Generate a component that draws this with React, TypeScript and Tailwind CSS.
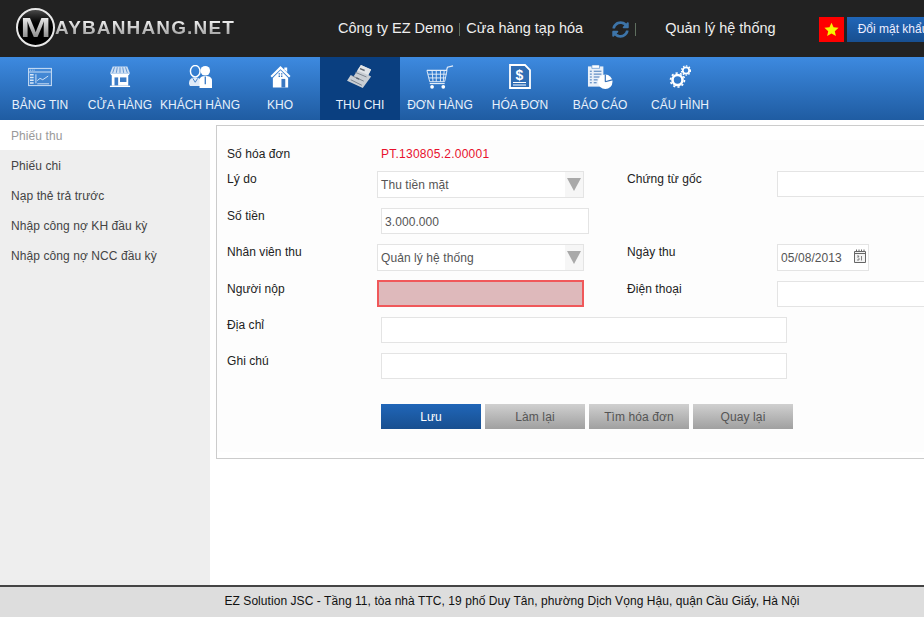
import React from 'react';
import { FaSyncAlt } from 'react-icons/fa';

const font = "font-['Liberation_Sans',Arial,sans-serif]";

const DashboardIcon = () => (
  <svg width="26" height="20" viewBox="0 0 28 22" fill="none" stroke="#dbe9f8" strokeWidth="1">
    <rect x="1.5" y="1.5" width="25" height="19" fill="#5e9be0" fillOpacity="0.35" />
    <path d="M2 5.5h24" />
    <path d="M3 3.5h1M5 3.5h1M7 3.5h1" />
    <path d="M3 8.5h4M3 11.5h4M3 14.5h4M3 17.5h4" strokeWidth="1.6" />
    <path d="M9.5 8v10" />
    <path d="M11 15l3-2.5 3 1.5 6-4" />
    <path d="M11 18.5h13" />
  </svg>
);

const StoreIcon = () => (
  <svg width="22" height="23" viewBox="0 0 24 24">
    <path d="M4 1h16l3 8H1z" fill="#cfe0f4" />
    <path d="M6 2L4 8M9 2L8 8M12 2v6M15 2l1 6M18 2l2 6" stroke="#4b86cb" strokeWidth="0.9" />
    <path d="M2 9h20v1.5H2z" fill="#fff" />
    <path d="M3 10h18v12H3z" fill="#fff" />
    <path d="M6 13h4v9H6z" fill="#3d7cc6" />
    <path d="M12 13h7v5h-7z" fill="#3d7cc6" />
    <path d="M1 22h22v1.500H1z" fill="#fff" />
  </svg>
);

const CustomerIcon = () => (
  <svg width="25" height="23" viewBox="0 0 26 24">
    <ellipse cx="7.5" cy="6.5" rx="5" ry="6" fill="none" stroke="#fff" strokeWidth="1.5" />
    <path d="M1 19c0-4 2.500-6 6.500-6 3 0 5 1 6 3v6H3c-1.200 0-2-1.500-2-3z" fill="#dfeaf8" />
    <path d="M5 14l2.500 4 2.500-4" fill="none" stroke="#3d7cc6" strokeWidth="1" />
    <circle cx="18" cy="6" r="5" fill="#fff" />
    <path d="M12 24v-8c0-3 2-4.500 6-4.500s7 1.500 7 4.500v8z" fill="#fff" />
    <path d="M18 12v8" stroke="#3d7cc6" strokeWidth="1.4" />
  </svg>
);

const HouseIcon = () => (
  <svg width="21" height="24" viewBox="0 0 22 24">
    <path d="M11 .5L.5 11l1.500 1.500L11 4l9 8.500 1.500-1.500z" fill="#fff" />
    <path d="M15 2h3v5l-3-3z" fill="#fff" />
    <path d="M3 13l8-8 8 8v10H3z" fill="#fff" />
    <path d="M12 14h4v9h-4z" fill="#3a78c2" />
    <path d="M9 8h1.500v1.500H9zM11.500 8H13v1.500h-1.500zM9 10.500h1.500V12H9zM11.500 10.500H13V12h-1.500z" fill="#3a78c2" />
  </svg>
);

const MoneyIcon = () => (
  <svg width="30" height="25" viewBox="0 0 30 27">
    <path d="M16 1l11 5-3 6 3 1.500-9 12.500L1 18l4-6 3 1.500z" fill="#c9ced4" />
    <path d="M16 1l11 5-3 6-12-5z" fill="#e1e4e8" />
    <path d="M10 9l12 5M7 13l12 5.500M5 17l12 6" stroke="#78808a" strokeWidth="1" />
    <path d="M15 5l5 2M11 15l3 1.400" stroke="#5c646e" strokeWidth="1.5" />
  </svg>
);

const CartIcon = () => (
  <svg width="28" height="26" viewBox="0 0 30 26" fill="none" stroke="#e3edf9" strokeWidth="1">
    <path d="M1 6h21l1-3.500L29 1" strokeWidth="1.300" />
    <path d="M1 6l3 12h16l2.500-12" />
    <path d="M2 10h20M3 14h18" />
    <path d="M6.500 6l1 12M11 6v12M15.500 6v12M19.500 6l-1 12" />
    <path d="M4 20h16" strokeWidth="1.300" />
    <circle cx="6.500" cy="23.500" r="2" fill="#fff" stroke="none" />
    <circle cx="18.500" cy="23.500" r="2" fill="#fff" stroke="none" />
  </svg>
);

const InvoiceIcon = () => (
  <svg width="22" height="25" viewBox="0 0 22 25">
    <path d="M1 1h15l5 5v18H1z" fill="#2f6db5" stroke="#fff" strokeWidth="1.800" />
    <text x="10.500" y="15.500" textAnchor="middle" fill="#fff" fontSize="14" fontWeight="700" fontFamily="Liberation Sans, sans-serif">$</text>
    <path d="M4 18.500h13M4 21h13" stroke="#fff" strokeWidth="1" />
  </svg>
);

const ReportIcon = () => (
  <svg width="26" height="26" viewBox="0 0 27 26">
    <path d="M1 2h16v21H1z" fill="#e9f0f9" />
    <path d="M5 0.500h8V4H5z" fill="#fff" stroke="#3d7cc6" strokeWidth="0.600" />
    <path d="M3 7h2M7 7h8M3 10h2M7 10h8M3 13h2M7 13h6M3 16h2M7 16h4M3 19h2M7 19h3" stroke="#3d74b6" strokeWidth="1" />
    <circle cx="19" cy="18" r="7.500" fill="#fff" />
    <path d="M19 18V10.500M19 18l7 -2" stroke="#356fb5" strokeWidth="1.200" />
  </svg>
);

const GearsIcon = () => (
  <svg width="22" height="24" viewBox="0 0 22 24" fill="none" stroke="#fff">
    <circle cx="8.500" cy="15" r="5" strokeWidth="2.600" />
    <circle cx="8.500" cy="15" r="7" strokeWidth="1.600" strokeDasharray="2.200 2.200" />
    <circle cx="17" cy="5.500" r="3.200" strokeWidth="1.800" />
    <circle cx="17" cy="5.500" r="4.600" strokeWidth="1.200" strokeDasharray="1.500 1.500" />
  </svg>
);

const navItems = [
  { label: 'BẢNG TIN', icon: <DashboardIcon /> },
  { label: 'CỬA HÀNG', icon: <StoreIcon /> },
  { label: 'KHÁCH HÀNG', icon: <CustomerIcon /> },
  { label: 'KHO', icon: <HouseIcon /> },
  { label: 'THU CHI', icon: <MoneyIcon />, active: true },
  { label: 'ĐƠN HÀNG', icon: <CartIcon /> },
  { label: 'HÓA ĐƠN', icon: <InvoiceIcon /> },
  { label: 'BÁO CÁO', icon: <ReportIcon /> },
  { label: 'CẤU HÌNH', icon: <GearsIcon /> },
];

const sideItems = ['Phiếu thu', 'Phiếu chi', 'Nạp thẻ trả trước', 'Nhập công nợ KH đầu kỳ', 'Nhập công nợ NCC đầu kỳ'];

const Label = ({ children, className = 'pt-[1px]' }: { children: React.ReactNode; className?: string }) => (
  <div className={`w-[150px] shrink-0 text-[12px] leading-[14px] tracking-[0.06px] text-[#222] ${className}`}>{children}</div>
);

const SelectBox = ({ value }: { value: string }) => (
  <div className="flex h-[27px] w-[207px] items-center justify-between border border-[#e4e4e4] bg-white pl-[3px] text-[12px] tracking-[0.08px] text-[#555]">
    {value}
    <div className="flex h-full w-[18px] items-center justify-center bg-[#f6f6f6]">
      <div className="h-0 w-0 border-x-[7px] border-t-[13px] border-x-transparent border-t-[#a9a9a9]" />
    </div>
  </div>
);

const TextBox = ({ className, value }: { className: string; value?: string }) => (
  <div className={`flex h-[26px] items-center border border-[#e4e4e4] bg-white pt-[1px] pl-[3px] text-[12px] tracking-[0.08px] text-[#555] ${className}`}>{value}</div>
);

const Row = ({ className, children }: { className: string; children: React.ReactNode }) => (
  <div className={`flex items-start ${className}`}>{children}</div>
);

const FormButton = ({ children, primary }: { children: string; primary?: boolean }) => (
  <button
    className={`h-[25px] w-[100px] text-[12px] tracking-[0.1px] ${
      primary ? 'bg-gradient-to-b from-[#2066b8] to-[#184f90] text-white' : 'bg-gradient-to-b from-[#d0d0d0] to-[#a0a0a0] text-[#555]'
    }`}
  >
    {children}
  </button>
);

export default function App() {
  return (
    <div className={`${font} flex h-[617px] w-[924px] flex-col overflow-hidden bg-white`}>
      {/* Header */}
      <header className="flex h-[57px] shrink-0 items-center bg-[#222222] pt-[1px] whitespace-nowrap">
        <div className="mb-[3px] ml-[16px] flex w-[322px] shrink-0 items-center">
          <div className="flex h-[39px] w-[39px] shrink-0 items-center justify-center overflow-hidden rounded-full border-2 border-[#e8e8e8] bg-gradient-to-b from-[#4a4a4a] via-black to-black">
            <span className="inline-block scale-x-[1.3] bg-gradient-to-b from-white to-[#777] bg-clip-text text-[28px] leading-none font-bold text-transparent">M</span>
          </div>
          <span className="bg-gradient-to-b from-white to-[#9a9a9a] bg-clip-text text-[19px] leading-none font-bold tracking-[1.15px] text-transparent">AYBANHANG.NET</span>
        </div>
        <span className="shrink-0 text-[14.5px] text-[#eee]">Công ty EZ Demo</span>
        <span className="mx-[6px] h-[13px] w-px shrink-0 bg-[#5f6f5f]" />
        <span className="shrink-0 text-[14.5px] text-[#eee]">Cửa hàng tạp hóa</span>
        <FaSyncAlt className="ml-[29px] shrink-0 text-[#3d74a8]" size={17} />
        <span className="ml-[6px] h-[13px] w-px shrink-0 bg-[#5f6f5f]" />
        <span className="ml-[29px] shrink-0 text-[14.5px] text-[#eee]">Quản lý hệ thống</span>
        <div className="ml-[43px] flex h-[25px] w-[25px] shrink-0 items-center justify-center bg-[#ff0000]">
          <svg width="15" height="15" viewBox="0 0 24 24">
            <path d="M12 1l3.300 7.400 8 .8-6 5.400 1.700 7.900L12 18.400l-7 4.100 1.700-7.900-6-5.400 8-.8z" fill="#f5f500" />
          </svg>
        </div>
        <button className="ml-[3px] h-[25px] w-[110px] shrink-0 bg-gradient-to-b from-[#2066b8] to-[#184f90] pl-[11px] text-left text-[12px] whitespace-nowrap text-[#eef]">Đổi mật khẩu</button>
      </header>

      {/* Nav */}
      <nav className="flex h-[63px] shrink-0 bg-gradient-to-b from-[#3d8ae0] to-[#1f5ca2]">
        {navItems.map((item) => (
          <div
            key={item.label}
            className={`flex h-full w-[80px] flex-col items-center ${item.active ? 'bg-[#0a3f80]' : ''}`}
          >
            <div className="flex h-[39px] items-center justify-center">{item.icon}</div>
            <span className="mt-[2px] text-[12px] leading-[14px] whitespace-nowrap text-[#e8f1fb]">{item.label}</span>
          </div>
        ))}
      </nav>

      <div className="flex min-h-0 flex-1">
        {/* Sidebar */}
        <aside className="w-[210px] shrink-0 bg-[#eeeeee]">
          {sideItems.map((item, i) => (
            <div key={item} className={`flex h-[30px] items-center pt-[1px] pl-[11px] text-[12px] tracking-[0.08px] ${i === 0 ? 'bg-white text-[#999]' : 'text-[#444]'}`}>
              {item}
            </div>
          ))}
        </aside>

        {/* Form panel */}
        <main className="flex-1 pt-[5px] pl-[6px]">
          <div className="h-[334px] w-[800px] border border-[#cccccc] pt-[14px] pb-[6px]">
            <div className="h-[312px] bg-[#fdfdfd] pt-[6px] pl-[10px]">
              <Row className="h-[25px]">
                <Label>Số hóa đơn</Label>
                <span className="pt-[1px] pl-[4px] text-[12px] leading-[14px] tracking-[0.25px] text-[#e8112d]">PT.130805.2.00001</span>
              </Row>
              <Row className="h-[37px]">
                <Label>Lý do</Label>
                <SelectBox value="Thu tiền mặt" />
                <div className="w-[43px]" />
                <Label>Chứng từ gốc</Label>
                <TextBox className="w-[200px]" />
              </Row>
              <Row className="h-[36px]">
                <Label>Số tiền</Label>
                <TextBox className="ml-[4px] w-[208px]" value="3.000.000" />
              </Row>
              <Row className="h-[36px]">
                <Label>Nhân viên thu</Label>
                <SelectBox value="Quản lý hệ thống" />
                <div className="w-[43px]" />
                <Label>Ngày thu</Label>
                <div className="flex h-[27px] w-[92px] items-center justify-between border border-[#e4e4e4] bg-white pr-[2px] pl-[3px] text-[12px] tracking-[0.08px] text-[#555]">
                  05/08/2013
                  <svg className="mb-[3px]" width="12" height="14" viewBox="0 0 12 14" fill="none" stroke="#666">
                    <path d="M.5 2.500h11v11H.5z" fill="#f3f3f3" />
                    <path d="M1 4.500h10" />
                    <path d="M2.500 .5v2M5 .5v2M7.500 .5v2M10 .5v2" />
                    <path d="M3 7h2l-1 1.500 1 1v1.500H3M7.500 7v4.500" strokeWidth="0.800" />
                  </svg>
                </div>
              </Row>
              <Row className="h-[37px]">
                <Label className="pt-[2px]">Người nộp</Label>
                <div className="h-[27px] w-[207px] border-2 border-[#f0585a] bg-[#deb9bb]" />
                <div className="w-[43px]" />
                <Label className="pt-[2px]">Điện thoại</Label>
                <TextBox className="mt-[1px] w-[200px]" />
              </Row>
              <Row className="h-[36px]">
                <Label>Địa chỉ</Label>
                <TextBox className="ml-[4px] w-[406px]" />
              </Row>
              <Row className="h-[51px]">
                <Label>Ghi chú</Label>
                <TextBox className="ml-[4px] w-[406px]" />
              </Row>
              <div className="flex gap-[4px] pl-[154px]">
                <FormButton primary>Lưu</FormButton>
                <FormButton>Làm lại</FormButton>
                <FormButton>Tìm hóa đơn</FormButton>
                <FormButton>Quay lại</FormButton>
              </div>
            </div>
          </div>
        </main>
      </div>

      {/* Footer */}
      <footer className="flex h-[32px] shrink-0 items-center justify-center border-t-2 border-[#444444] bg-[#dddddd] pb-[2px] pl-[100px] text-[12px] tracking-[0.06px] text-[#111]">
        EZ Solution JSC - Tầng 11, tòa nhà TTC, 19 phố Duy Tân, phường Dịch Vọng Hậu, quận Cầu Giấy, Hà Nội
      </footer>
    </div>
  );
}
